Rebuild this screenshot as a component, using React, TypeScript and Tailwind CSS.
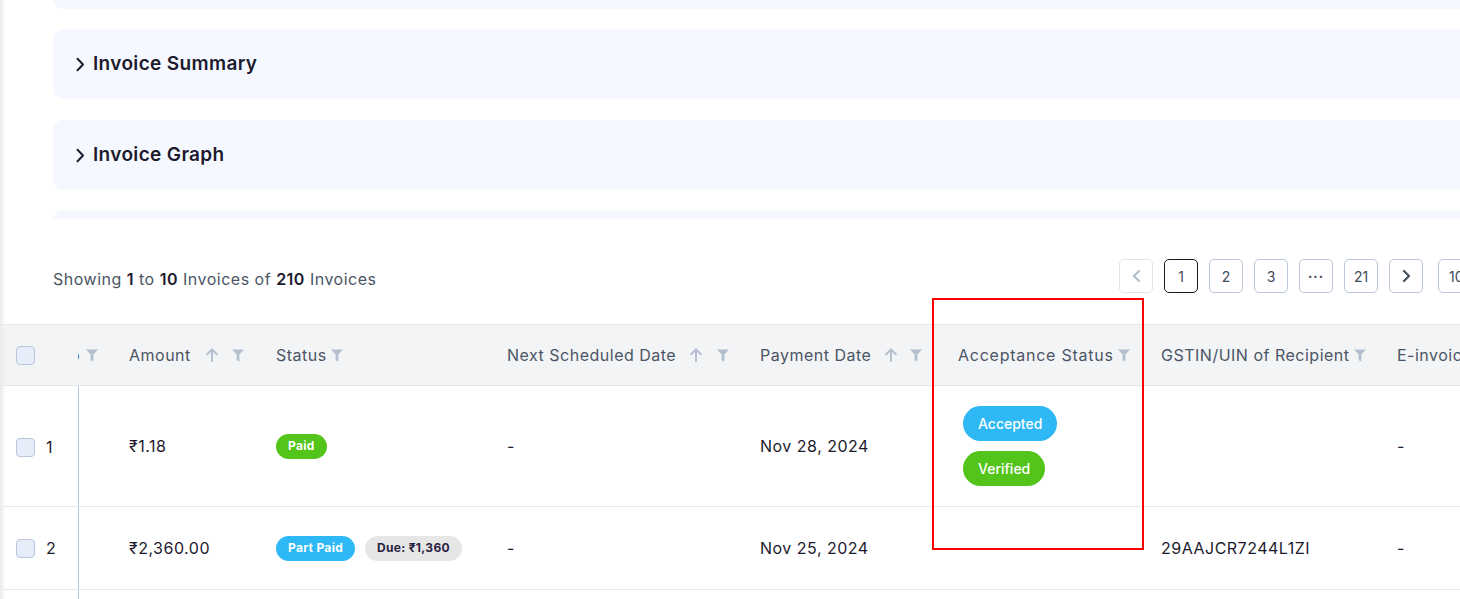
import React from "react";

const Filter = () => (
  <svg width="12" height="13" viewBox="0 0 12 13" className="shrink-0">
    <path d="M0 0.5h12L7.4 5.6V12.5L4.6 11.2V5.6Z" fill="#b3bfcf" />
  </svg>
);

const ArrowUp = () => (
  <svg width="12" height="14" viewBox="0 0 12 14" className="shrink-0">
    <path d="M6 13V1.6M1.2 6.2L6 1.4l4.8 4.8" fill="none" stroke="#b3bfcf" strokeWidth="2" strokeLinecap="round" strokeLinejoin="round" />
  </svg>
);

const Chevron = ({ dir, color }: { dir: "left" | "right"; color: string }) => (
  <svg width="9" height="14" viewBox="0 0 9 14">
    <path d={dir === "right" ? "M2 2l5 5-5 5" : "M7 2L2 7l5 5"} fill="none" stroke={color} strokeWidth="2.2" strokeLinecap="round" strokeLinejoin="round" />
  </svg>
);

const Checkbox = () => (
  <div className="w-[19px] h-[19px] rounded-[4px] bg-[#e6edf8] border border-[#b8c6da] shrink-0" />
);

const cols = "grid grid-cols-[78px_35px_147px_231px_253px_198px_203px_236px_220px]";

const Accordion = ({ title }: { title: string }) => (
  <div className="h-[70px] rounded-[10px] bg-[#f5f9ff] flex items-center pl-[23px] gap-[8px]">
    <svg width="9" height="15" viewBox="0 0 9 15">
      <path d="M1.5 1.8l5.5 5.7-5.5 5.7" fill="none" stroke="#1f1b33" strokeWidth="2" strokeLinecap="round" strokeLinejoin="round" />
    </svg>
    <span className="text-[19px] font-semibold text-[#1d1a2e] tracking-[0.35px]">{title}</span>
  </div>
);

const PageBtn = ({ children, active }: { children: React.ReactNode; active?: boolean }) => (
  <div
    className={
      "w-[34px] h-[34px] rounded-[5px] border flex items-center justify-center text-[14px] text-[#3f4a5c] shrink-0 " +
      (active ? "border-[#1a1a1a]" : "border-[#b9c6d8]")
    }
  >
    {children}
  </div>
);

export default function App() {
  return (
    <div
      className="relative w-[1460px] h-[599px] overflow-hidden bg-white"
      style={{ fontFamily: "Inter, 'Noto Sans', sans-serif" }}
    >
      {/* top accordions (scrolled region) */}
      <div className="h-[219px] overflow-hidden pl-[53px] w-[1500px]">
        <div className="h-[9px] rounded-b-[10px] bg-[#f5f9ff]" />
        <div className="mt-[20px]">
          <Accordion title="Invoice Summary" />
        </div>
        <div className="mt-[21px]">
          <Accordion title="Invoice Graph" />
        </div>
        <div className="mt-[20px] h-[20px] rounded-t-[10px] bg-[#f5f9ff]" />
      </div>

      {/* pagination row */}
      <div className="flex items-center pl-[53px] mt-[40px] h-[34px] w-[1600px]">
        <div className="w-[1066px] shrink-0 text-[16px] tracking-[0.5px] text-[#4b5565] pt-[6px]">
          Showing <span className="font-semibold text-[#1d1a2e]">1</span> to{" "}
          <span className="font-semibold text-[#1d1a2e]">10</span> Invoices of{" "}
          <span className="font-semibold text-[#1d1a2e]">210</span> Invoices
        </div>
        <div className="flex gap-[11px] items-center">
          <div className="w-[34px] h-[34px] rounded-[5px] border border-[#dfe5ee] flex items-center justify-center">
            <Chevron dir="left" color="#b4bfcc" />
          </div>
          <PageBtn active>1</PageBtn>
          <PageBtn>2</PageBtn>
          <PageBtn>3</PageBtn>
          <PageBtn>
            <span className="text-[13px] font-bold tracking-[1px] -mt-[5px]">...</span>
          </PageBtn>
          <PageBtn>21</PageBtn>
          <div className="w-[34px] h-[34px] rounded-[5px] border border-[#b9c6d8] flex items-center justify-center">
            <Chevron dir="right" color="#46505f" />
          </div>
          <div className="ml-[4px] w-[110px] h-[34px] rounded-[5px] border border-[#b9c6d8] flex items-center pl-[10px] text-[14px] text-[#3f4a5c]">
            10 / page
          </div>
        </div>
      </div>

      {/* table */}
      <div className="mt-[31px] w-[1600px] tracking-[0.5px]">
        {/* header */}
        <div className={cols + " h-[62px] bg-[#f3f4f6] border-t border-b border-[#e3e8f0] text-[16px] text-[#4b5565] items-center"}>
          <div className="pl-[16px] flex items-center">
            <Checkbox />
          </div>
          <div className="flex items-center justify-end pr-[15px] gap-[6px] overflow-hidden">
            <span className="shrink-0">No</span>
            <Filter />
          </div>
          <div className="pl-[16px] flex items-center">
            <span>Amount</span>
            <span className="ml-[15px]"><ArrowUp /></span>
            <span className="ml-[14px]"><Filter /></span>
          </div>
          <div className="pl-[16px] flex items-center gap-[4px]">
            <span>Status</span>
            <Filter />
          </div>
          <div className="pl-[16px] flex items-center">
            <span>Next Scheduled Date</span>
            <span className="ml-[14px]"><ArrowUp /></span>
            <span className="ml-[15px]"><Filter /></span>
          </div>
          <div className="pl-[16px] flex items-center">
            <span>Payment Date</span>
            <span className="ml-[14px]"><ArrowUp /></span>
            <span className="ml-[13px]"><Filter /></span>
          </div>
          <div className="pl-[16px] flex items-center gap-[4px]">
            <span className="tracking-[0.75px]">Acceptance Status</span>
            <Filter />
          </div>
          <div className="pl-[16px] flex items-center gap-[4px]">
            <span>GSTIN/UIN of Recipient</span>
            <Filter />
          </div>
          <div className="pl-[16px] flex items-center whitespace-nowrap">
            <span>E-invoice Status</span>
          </div>
        </div>

        {/* row 1 */}
        <div className={cols + " h-[121px] border-b border-[#e3e8f0] text-[16px] text-[#1d1a2e] items-center"}>
          <div className="pl-[16px] flex items-center gap-[11px] pt-[2px]">
            <Checkbox />
            <span>1</span>
          </div>
          <div className="h-full border-l border-[#b8c6da]" />
          <div className="pl-[16px]">₹1.18</div>
          <div className="pl-[16px] flex tracking-[0.3px]">
            <span className="h-[25px] px-[12px] rounded-full bg-[#52c41a] text-white text-[12px] font-bold flex items-center">Paid</span>
          </div>
          <div className="pl-[16px]">-</div>
          <div className="pl-[16px]">Nov 28, 2024</div>
          <div className="pl-[21px] flex flex-col items-start gap-[10px] tracking-normal">
            <span className="h-[35px] px-[15px] rounded-full bg-[#2eb8f5] text-white text-[14px] font-medium flex items-center">Accepted</span>
            <span className="h-[35px] px-[15px] rounded-full bg-[#52c41a] text-white text-[14px] font-medium flex items-center">Verified</span>
          </div>
          <div className="pl-[16px]" />
          <div className="pl-[16px]">-</div>
        </div>

        {/* row 2 */}
        <div className={cols + " h-[83px] border-b border-[#e3e8f0] text-[16px] text-[#1d1a2e] items-center"}>
          <div className="pl-[16px] flex items-center gap-[11px]">
            <Checkbox />
            <span>2</span>
          </div>
          <div className="h-full border-l border-[#b8c6da]" />
          <div className="pl-[16px]">₹2,360.00</div>
          <div className="pl-[16px] flex gap-[10px] tracking-[0.3px]">
            <span className="h-[25px] px-[12px] rounded-full bg-[#2eb8f5] text-white text-[12px] font-bold flex items-center">Part Paid</span>
            <span className="h-[25px] px-[12px] rounded-full bg-[#e6e6e6] text-[#28213f] text-[12px] font-bold flex items-center">Due: ₹1,360</span>
          </div>
          <div className="pl-[16px]">-</div>
          <div className="pl-[16px]">Nov 25, 2024</div>
          <div className="pl-[16px]" />
          <div className="pl-[16px]">29AAJCR7244L1ZI</div>
          <div className="pl-[16px]">-</div>
        </div>

        {/* row 3 (partial) */}
        <div className={cols + " h-[40px]"}>
          <div />
          <div className="h-full border-l border-[#b8c6da]" />
        </div>
      </div>

      {/* left edge shadow */}
      <div className="absolute left-0 top-0 h-full w-[6px] bg-gradient-to-r from-[#ebebeb] to-transparent pointer-events-none" />

      {/* red annotation box */}
      <div className="absolute left-[932px] top-[298px] w-[212px] h-[252px] border-2 border-[#ff0000] pointer-events-none" />
    </div>
  );
}
